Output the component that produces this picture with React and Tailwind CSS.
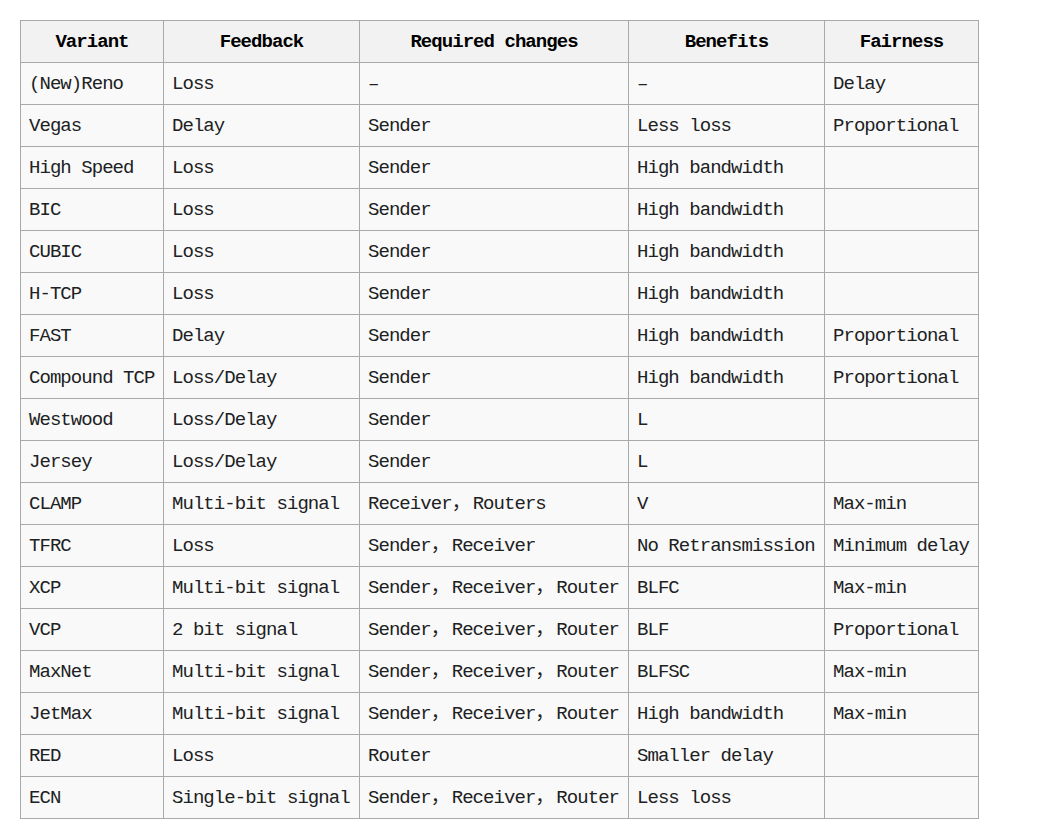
import React from "react";

const rows = [
  ["(New)Reno", "Loss", "–", "–", "Delay"],
  ["Vegas", "Delay", "Sender", "Less loss", "Proportional"],
  ["High Speed", "Loss", "Sender", "High bandwidth", ""],
  ["BIC", "Loss", "Sender", "High bandwidth", ""],
  ["CUBIC", "Loss", "Sender", "High bandwidth", ""],
  ["H-TCP", "Loss", "Sender", "High bandwidth", ""],
  ["FAST", "Delay", "Sender", "High bandwidth", "Proportional"],
  ["Compound TCP", "Loss/Delay", "Sender", "High bandwidth", "Proportional"],
  ["Westwood", "Loss/Delay", "Sender", "L", ""],
  ["Jersey", "Loss/Delay", "Sender", "L", ""],
  ["CLAMP", "Multi-bit signal", "Receiver，Routers", "V", "Max-min"],
  ["TFRC", "Loss", "Sender，Receiver", "No Retransmission", "Minimum delay"],
  ["XCP", "Multi-bit signal", "Sender，Receiver，Router", "BLFC", "Max-min"],
  ["VCP", "2 bit signal", "Sender，Receiver，Router", "BLF", "Proportional"],
  ["MaxNet", "Multi-bit signal", "Sender，Receiver，Router", "BLFSC", "Max-min"],
  ["JetMax", "Multi-bit signal", "Sender，Receiver，Router", "High bandwidth", "Max-min"],
  ["RED", "Loss", "Router", "Smaller delay", ""],
  ["ECN", "Single-bit signal", "Sender，Receiver，Router", "Less loss", ""],
];

const headers = ["Variant", "Feedback", "Required changes", "Benefits", "Fairness"];
const widths = ["w-[143px]", "w-[196px]", "w-[269px]", "w-[196px]", "w-[154px]"];

// full-width comma takes two monospace cells, like in the original font
function CellText({ text }) {
  const parts = text.split("，");
  return parts.map((p, i) => (
    <React.Fragment key={i}>
      {p}
      {i < parts.length - 1 && <span className="inline-block w-[21px]">，</span>}
    </React.Fragment>
  ));
}

export default function App() {
  return (
    <div className="min-h-screen bg-white pt-5 pl-5" style={{ fontFamily: '"Liberation Mono", "Noto Sans CJK SC", monospace' }}>
      <table className="table-fixed border-collapse text-[19px] leading-none tracking-[-0.95px]">
        <colgroup>
          {widths.map((w, i) => (
            <col key={i} className={w} />
          ))}
        </colgroup>
        <thead>
          <tr>
            {headers.map((h) => (
              <th key={h} className="h-[42px] border border-[#a9a9a9] bg-[#f2f2f2] px-2 pt-[2px] text-center font-bold text-black">
                {h}
              </th>
            ))}
          </tr>
        </thead>
        <tbody>
          {rows.map((r) => (
            <tr key={r[0]}>
              {r.map((c, i) => (
                <td key={i} className="h-[42px] whitespace-nowrap border border-[#a9a9a9] bg-[#f9f9f9] px-2 pt-[2px] text-left text-[#202122]">
                  <CellText text={c} />
                </td>
              ))}
            </tr>
          ))}
        </tbody>
      </table>
    </div>
  );
}
